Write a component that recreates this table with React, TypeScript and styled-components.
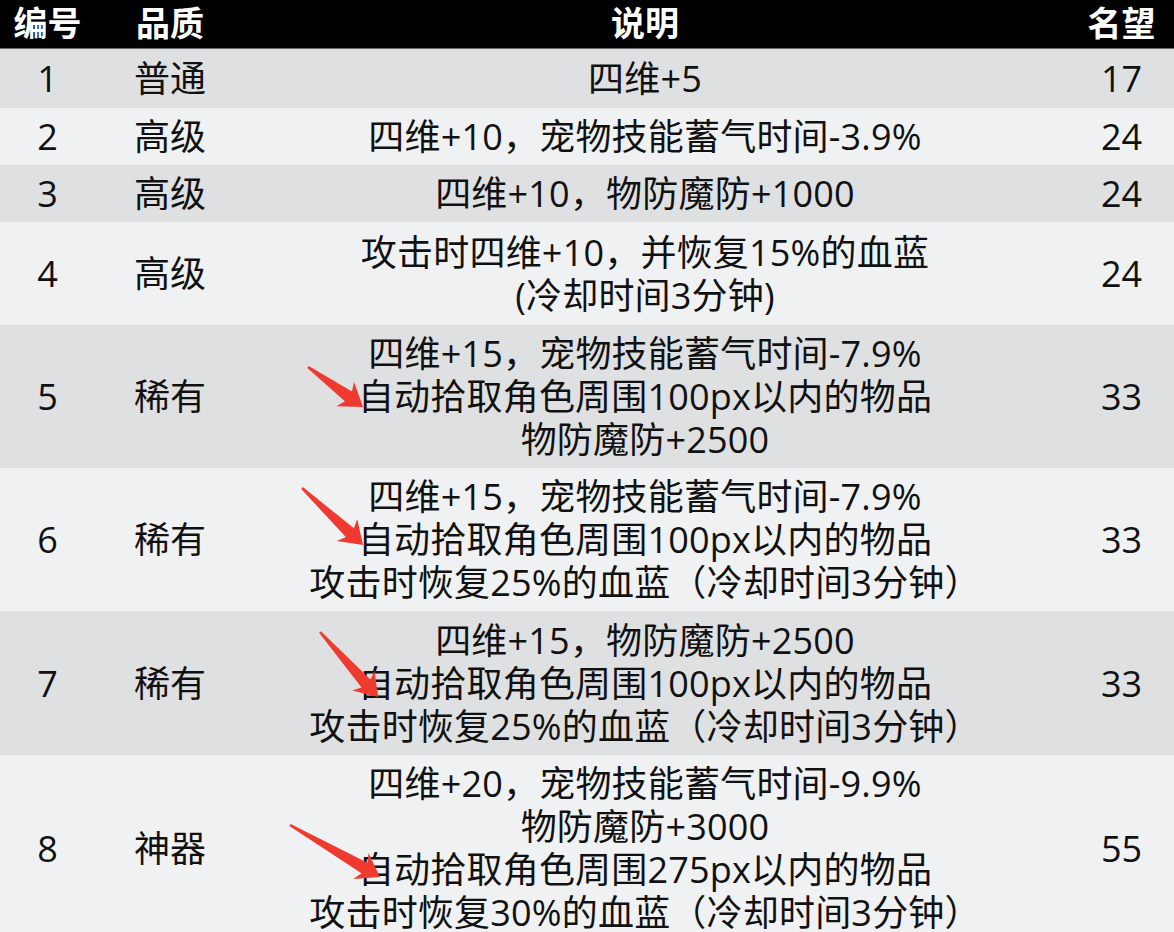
import React from 'react';
import styled, { createGlobalStyle } from 'styled-components';

const GlobalStyle = createGlobalStyle`
  html, body {
    margin: 0;
    padding: 0;
    overflow: hidden;
    background: #f0f1f3;
  }
`;

const COLS = '95px 150px 1fr 129px';

const Page = styled.div`
  position: relative;
  width: 1174px;
  font-family: "Open Sans", "Noto Sans CJK SC", sans-serif;
  color: #111;
`;

const HeaderRow = styled.div`
  display: grid;
  grid-template-columns: ${COLS};
  height: 48px;
  align-items: center;
  background: #000;
  border-bottom: 1px solid #6a6a6a;
  color: #fff;
  font-family: "Noto Sans CJK SC", sans-serif;
  font-weight: 700;
  font-size: 34px;
  line-height: 48px;
`;

const HeadCell = styled.div<{ $shift?: number }>`
  text-align: center;
  padding-left: ${(p) => p.$shift || 0}px;
  margin-top: -4px;
`;

const Row = styled.div<{ $shade: boolean; $pad: number }>`
  display: grid;
  grid-template-columns: ${COLS};
  align-items: center;
  padding: ${(p) => p.$pad}px 0;
  background: ${(p) => (p.$shade ? '#dfe0e2' : '#f0f1f3')};
  font-size: 36px;
  line-height: 43px;
`;

const Cell = styled.div<{ $shift?: number }>`
  text-align: center;
  padding-left: ${(p) => p.$shift || 0}px;
  white-space: nowrap;
`;

const Desc = styled.div`
  display: flex;
  flex-direction: column;
  align-items: center;
  white-space: nowrap;
  letter-spacing: 0.2px;
`;

const Overlay = styled.svg`
  position: absolute;
  top: 0;
  left: 0;
  width: 1174px;
  height: 932px;
  pointer-events: none;
`;

type Item = { no: number; grade: string; lines: string[]; fame: number; pad: number };

const items: Item[] = [
  { no: 1, grade: '普通', lines: ['四维+5'], fame: 17, pad: 8 },
  { no: 2, grade: '高级', lines: ['四维+10，宠物技能蓄气时间-3.9%'], fame: 24, pad: 7 },
  { no: 3, grade: '高级', lines: ['四维+10，物防魔防+1000'], fame: 24, pad: 7 },
  { no: 4, grade: '高级', lines: ['攻击时四维+10，并恢复15%的血蓝', '(冷却时间3分钟)'], fame: 24, pad: 8.5 },
  {
    no: 5,
    grade: '稀有',
    lines: ['四维+15，宠物技能蓄气时间-7.9%', '自动拾取角色周围100px以内的物品', '物防魔防+2500'],
    fame: 33,
    pad: 7,
  },
  {
    no: 6,
    grade: '稀有',
    lines: ['四维+15，宠物技能蓄气时间-7.9%', '自动拾取角色周围100px以内的物品', '攻击时恢复25%的血蓝（冷却时间3分钟）'],
    fame: 33,
    pad: 7,
  },
  {
    no: 7,
    grade: '稀有',
    lines: ['四维+15，物防魔防+2500', '自动拾取角色周围100px以内的物品', '攻击时恢复25%的血蓝（冷却时间3分钟）'],
    fame: 33,
    pad: 7.5,
  },
  {
    no: 8,
    grade: '神器',
    lines: [
      '四维+20，宠物技能蓄气时间-9.9%',
      '物防魔防+3000',
      '自动拾取角色周围275px以内的物品',
      '攻击时恢复30%的血蓝（冷却时间3分钟）',
    ],
    fame: 55,
    pad: 7,
  },
];

// tail -> tip, in page pixels
const arrows = [
  [308, 367, 363, 407],
  [302, 488, 363, 545],
  [320, 632, 378, 697],
  [290, 825, 380, 877],
];

const arrowPoints = (tx: number, ty: number, px: number, py: number) => {
  const len = Math.hypot(px - tx, py - ty);
  const ux = (px - tx) / len;
  const uy = (py - ty) / len;
  const nx = -uy;
  const ny = ux;
  const at = (back: number, side: number) =>
    `${(px - ux * back + nx * side).toFixed(1)},${(py - uy * back + ny * side).toFixed(1)}`;
  return [
    at(len, 1.2),
    at(18, 6),
    at(22, 15),
    `${px},${py}`,
    at(22, -15),
    at(18, -6),
    at(len, -1.2),
  ].join(' ');
};

export default function App() {
  return (
    <Page>
      <GlobalStyle />
      <HeaderRow>
        <HeadCell>编号</HeadCell>
        <HeadCell>品质</HeadCell>
        <HeadCell>说明</HeadCell>
        <HeadCell $shift={24}>名望</HeadCell>
      </HeaderRow>
      {items.map((it, i) => (
        <Row key={it.no} $shade={i % 2 === 0} $pad={it.pad}>
          <Cell>{it.no}</Cell>
          <Cell>{it.grade}</Cell>
          <Desc>
            {it.lines.map((l, j) => (
              <span key={j}>{l}</span>
            ))}
          </Desc>
          <Cell $shift={24}>{it.fame}</Cell>
        </Row>
      ))}
      <Overlay viewBox="0 0 1174 932">
        {arrows.map(([tx, ty, px, py], i) => (
          <polygon key={i} points={arrowPoints(tx, ty, px, py)} fill="#ef3a2f" />
        ))}
      </Overlay>
    </Page>
  );
}
